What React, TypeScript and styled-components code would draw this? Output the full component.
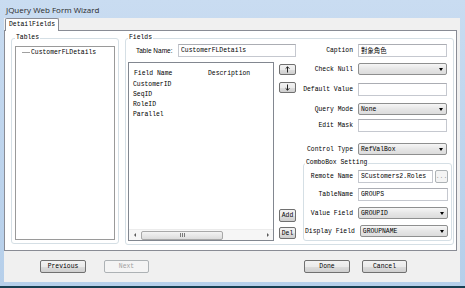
import React from 'react';
import styled, { createGlobalStyle } from 'styled-components';

const mono = `"Liberation Mono", "DejaVu Sans Mono", "Noto Sans CJK TC", monospace`;

const GlobalStyle = createGlobalStyle`
	* {
		box-sizing: border-box;
	}
	html,
	body {
		margin: 0;
		padding: 0;
	}
	body {
		width: 465px;
		height: 288px;
		overflow: hidden;
		background: #183f52;
		font-family: ${mono};
		font-size: 6.4px;
		color: #000;
	}
`;

const Window = styled.div`
	width: 465px;
	height: 288px;
	display: flex;
	flex-direction: column;
	background: linear-gradient(180deg, #c9dcf1 0%, #bfd5ed 45%, #b6cfea 100%);
	border-bottom: 2px solid #183f52;
`;

const TitleBar = styled.div`
	height: 18px;
	padding-left: 6px;
	display: flex;
	align-items: center;
	font-family: 'Open Sans', 'Noto Sans', sans-serif;
	font-size: 8px;
	color: #2a2a2a;
`;

const Client = styled.div`
	flex: 1;
	margin: 0 5px 4px 4px;
	background: #f0f0f0;
	display: flex;
	flex-direction: column;
`;

const TabStrip = styled.div`
	height: 12px;
	display: flex;
	align-items: flex-end;
	padding-left: 1px;
`;

const Tab = styled.div`
	position: relative;
	z-index: 1;
	width: 54px;
	height: 13px;
	margin-bottom: -1px;
	padding-left: 3px;
	background: #fff;
	border: 1px solid #898c95;
	border-bottom: none;
	border-radius: 2px 2px 0 0;
	line-height: 11px;
`;

const TabPage = styled.div`
	height: 221px;
	margin-right: 3px;
	padding: 3px 0 0 6px;
	display: flex;
	align-items: flex-start;
	background: #fff;
	border: 1px solid #898c95;
`;

const GroupBox = styled.fieldset<{ $w: number }>`
	width: ${(p) => p.$w}px;
	min-width: 0;
	margin: 0;
	border: 1px solid #d5dfe5;
	border-radius: 3px;
`;

const Legend = styled.legend`
	padding: 0 1px;
	line-height: 8px;
	font-size: 6.4px;
`;

const TablesBox = styled(GroupBox)`
	padding: 4px 3px 3px 3px;
`;

const ListBox = styled.div`
	height: 194px;
	border: 1px solid #9a9a9a;
	background: #fff;
`;

const TreeNode = styled.div`
	height: 10px;
	display: flex;
	align-items: center;
	gap: 1px;
	padding-left: 6px;
	&::before {
		content: '';
		width: 8px;
		border-top: 1px solid #a0a0a0;
	}
`;

const FieldsBox = styled(GroupBox)`
	margin-left: 6px;
	padding: 2px 0 3px 2px;
`;

const FieldsBody = styled.div`
	display: flex;
	gap: 7px;
`;

const LeftCol = styled.div`
	width: 168px;
	display: flex;
	flex-direction: column;
`;

const TableNameRow = styled.div`
	height: 13px;
	display: flex;
	align-items: center;
	justify-content: space-between;
	padding-left: 8px;
`;

const SansLabel = styled.span`
	font-family: 'Liberation Sans', Arial, sans-serif;
	font-size: 6.5px;
`;

const TextInput = styled.input<{ $w: number }>`
	width: ${(p) => p.$w}px;
	height: 100%;
	margin: 0;
	padding: 0 2px;
	border: 1px solid #c5c8cf;
	border-top-color: #abadb3;
	background: #fff;
	font-family: ${mono};
	font-size: 6.4px;
	color: #000;
	outline: none;
`;

const ListRow = styled.div`
	height: 179px;
	margin-top: 5px;
	display: flex;
	gap: 5px;
`;

const ListView = styled.div`
	width: 146px;
	display: flex;
	flex-direction: column;
	border: 1px solid #828790;
	background: #fff;
`;

const ListHeader = styled.div`
	height: 17px;
	padding: 4px 0 0 5px;
	display: flex;
	align-items: center;
`;

const HeaderCell = styled.span<{ $w: number }>`
	width: ${(p) => p.$w}px;
`;

const ListItem = styled.div`
	height: 10px;
	line-height: 10px;
	padding-left: 4px;
`;

const Filler = styled.div`
	flex: 1;
`;

const HScroll = styled.div`
	height: 11px;
	display: flex;
	align-items: center;
	background: #f6f6f6;
	border-top: 1px solid #ececec;
`;

const ScrollArrow = styled.div<{ $dir: 'left' | 'right' }>`
	width: 11px;
	height: 100%;
	display: flex;
	align-items: center;
	justify-content: center;
	&::before {
		content: '';
		border-top: 2px solid transparent;
		border-bottom: 2px solid transparent;
		${(p) =>
			p.$dir === 'left'
				? 'border-right: 2px solid #5a5a5a;'
				: 'border-left: 2px solid #5a5a5a;'}
	}
`;

const Thumb = styled.div`
	width: 82px;
	height: 9px;
	margin-left: 1px;
	display: flex;
	align-items: center;
	justify-content: center;
	border: 1px solid #a8a8a8;
	border-radius: 2px;
	background: linear-gradient(180deg, #f3f3f3, #dcdcdc);
	&::before {
		content: '';
		width: 5px;
		height: 4px;
		background: repeating-linear-gradient(90deg, #7a7a7a 0 1px, transparent 1px 2px);
	}
`;

const ButtonCol = styled.div`
	width: 17px;
	padding: 2px 0;
	display: flex;
	flex-direction: column;
`;

const WinButton = styled.button<{ $w?: number; $h: number; $mt?: number; $ml?: number; $disabled?: boolean }>`
	width: ${(p) => (p.$w ? `${p.$w}px` : '100%')};
	height: ${(p) => p.$h}px;
	margin: ${(p) => p.$mt || 0}px 0 0 ${(p) => p.$ml || 0}px;
	padding: 0;
	display: flex;
	align-items: center;
	justify-content: center;
	border: 1px solid ${(p) => (p.$disabled ? '#adb2b5' : '#707070')};
	border-radius: 2px;
	background: ${(p) =>
		p.$disabled
			? '#f4f4f4'
			: 'linear-gradient(180deg, #f2f2f2 0%, #ebebeb 50%, #dddddd 51%, #cfcfcf 100%)'};
	font-family: ${mono};
	font-size: 6.4px;
	color: ${(p) => (p.$disabled ? '#a0a0a0' : '#000')};
`;

const RightCol = styled.div`
	width: 150px;
	display: flex;
	flex-direction: column;
`;

const FormRow = styled.div<{ $mt: number; $h: number; $mr?: number }>`
	height: ${(p) => p.$h}px;
	margin: ${(p) => p.$mt}px ${(p) => p.$mr ?? 6}px 0 0;
	display: flex;
	align-items: center;
	gap: 5px;
`;

const FormLabel = styled.span`
	flex: 1;
	text-align: right;
	white-space: nowrap;
`;

const SelectBox = styled.div<{ $w: number }>`
	width: ${(p) => p.$w}px;
	height: 100%;
	padding-left: 2px;
	display: flex;
	align-items: center;
	border: 1px solid #8e8f8f;
	border-radius: 2px;
	background: linear-gradient(180deg, #f6f6f6 0%, #e6e6e6 50%, #dcdcdc 100%);
`;

const SelectText = styled.span`
	flex: 1;
`;

const Caret = styled.span`
	margin-right: 3px;
	border-left: 2px solid transparent;
	border-right: 2px solid transparent;
	border-top: 3px solid #000;
`;

const ComboBox = styled(GroupBox)`
	margin: 4px 1px 0 0;
	padding: 3px 3px 3px 1px;
`;

const FieldGroup = styled.div`
	width: 90px;
	height: 100%;
	display: flex;
	gap: 2px;
`;

const ButtonBar = styled.div`
	flex: 1;
	padding: 9px 53px 0 36px;
	display: flex;
	align-items: flex-start;
`;

const Arrow = ({ up }: { up: boolean }) => (
	<svg width="5" height="7" viewBox="0 0 5 7">
		<path
			d={up ? 'M2.5 0.8V6.5M0.6 2.7L2.5 0.8L4.4 2.7' : 'M2.5 0.5V6.2M0.6 4.3L2.5 6.2L4.4 4.3'}
			stroke="#222"
			strokeWidth="1"
			fill="none"
		/>
	</svg>
);

function Select({ value, width }: { value: string; width: number }) {
	return (
		<SelectBox $w={width}>
			<SelectText>{value}</SelectText>
			<Caret />
		</SelectBox>
	);
}

const fields = ['CustomerID', 'SeqID', 'RoleID', 'Parallel'];

export default function App() {
	return (
		<>
			<GlobalStyle />
			<Window>
				<TitleBar>JQuery Web Form Wizard</TitleBar>
				<Client>
					<TabStrip>
						<Tab>DetailFields</Tab>
					</TabStrip>
					<TabPage>
						<TablesBox $w={108}>
							<Legend>Tables</Legend>
							<ListBox>
								<TreeNode>CustomerFLDetails</TreeNode>
							</ListBox>
						</TablesBox>
						<FieldsBox $w={329}>
							<Legend>Fields</Legend>
							<FieldsBody>
								<LeftCol>
									<TableNameRow>
										<SansLabel>Table Name:</SansLabel>
										<TextInput $w={118} readOnly value="CustomerFLDetails" />
									</TableNameRow>
									<ListRow>
										<ListView>
											<ListHeader>
												<HeaderCell $w={74}>Field Name</HeaderCell>
												<HeaderCell $w={60}>Description</HeaderCell>
											</ListHeader>
											{fields.map((f) => (
												<ListItem key={f}>{f}</ListItem>
											))}
											<Filler />
											<HScroll>
												<ScrollArrow $dir="left" />
												<Thumb />
												<Filler />
												<ScrollArrow $dir="right" />
											</HScroll>
										</ListView>
										<ButtonCol>
											<WinButton $h={11}>
												<Arrow up />
											</WinButton>
											<WinButton $h={11} $mt={7}>
												<Arrow up={false} />
											</WinButton>
											<Filler />
											<WinButton $h={13}>Add</WinButton>
											<WinButton $h={12} $mt={5}>
												Del
											</WinButton>
										</ButtonCol>
									</ListRow>
								</LeftCol>
								<RightCol>
									<FormRow $mt={0} $h={13}>
										<FormLabel>Caption</FormLabel>
										<TextInput $w={89} readOnly value="對象角色" />
									</FormRow>
									<FormRow $mt={6} $h={12}>
										<FormLabel>Check Null</FormLabel>
										<Select value="" width={89} />
									</FormRow>
									<FormRow $mt={8} $h={13}>
										<FormLabel>Default Value</FormLabel>
										<TextInput $w={89} readOnly value="" />
									</FormRow>
									<FormRow $mt={7} $h={12}>
										<FormLabel>Query Mode</FormLabel>
										<Select value="None" width={89} />
									</FormRow>
									<FormRow $mt={4} $h={13}>
										<FormLabel>Edit Mask</FormLabel>
										<TextInput $w={89} readOnly value="" />
									</FormRow>
									<FormRow $mt={11} $h={12}>
										<FormLabel>Control Type</FormLabel>
										<Select value="RefValBox" width={89} />
									</FormRow>
									<ComboBox $w={149}>
										<Legend>ComboBox Setting</Legend>
										<FormRow $mt={0} $h={13} $mr={0}>
											<FormLabel>Remote Name</FormLabel>
											<FieldGroup>
												<TextInput $w={75} readOnly value="SCustomers2.Roles" />
												<WinButton $w={13} $h={13} $disabled>
													...
												</WinButton>
											</FieldGroup>
										</FormRow>
										<FormRow $mt={5} $h={13} $mr={0}>
											<FormLabel>TableName</FormLabel>
											<TextInput $w={90} readOnly value="GROUPS" />
										</FormRow>
										<FormRow $mt={6} $h={12} $mr={0}>
											<FormLabel>Value Field</FormLabel>
											<Select value="GROUPID" width={90} />
										</FormRow>
										<FormRow $mt={6} $h={12} $mr={0}>
											<FormLabel>Display Field</FormLabel>
											<Select value="GROUPNAME" width={90} />
										</FormRow>
									</ComboBox>
								</RightCol>
							</FieldsBody>
						</FieldsBox>
					</TabPage>
					<ButtonBar>
						<WinButton $w={46} $h={13}>
							Previous
						</WinButton>
						<WinButton $w={45} $h={13} $ml={18} $disabled>
							Next
						</WinButton>
						<Filler />
						<WinButton $w={46} $h={13}>
							Done
						</WinButton>
						<WinButton $w={45} $h={13} $ml={12}>
							Cancel
						</WinButton>
					</ButtonBar>
				</Client>
			</Window>
		</>
	);
}
